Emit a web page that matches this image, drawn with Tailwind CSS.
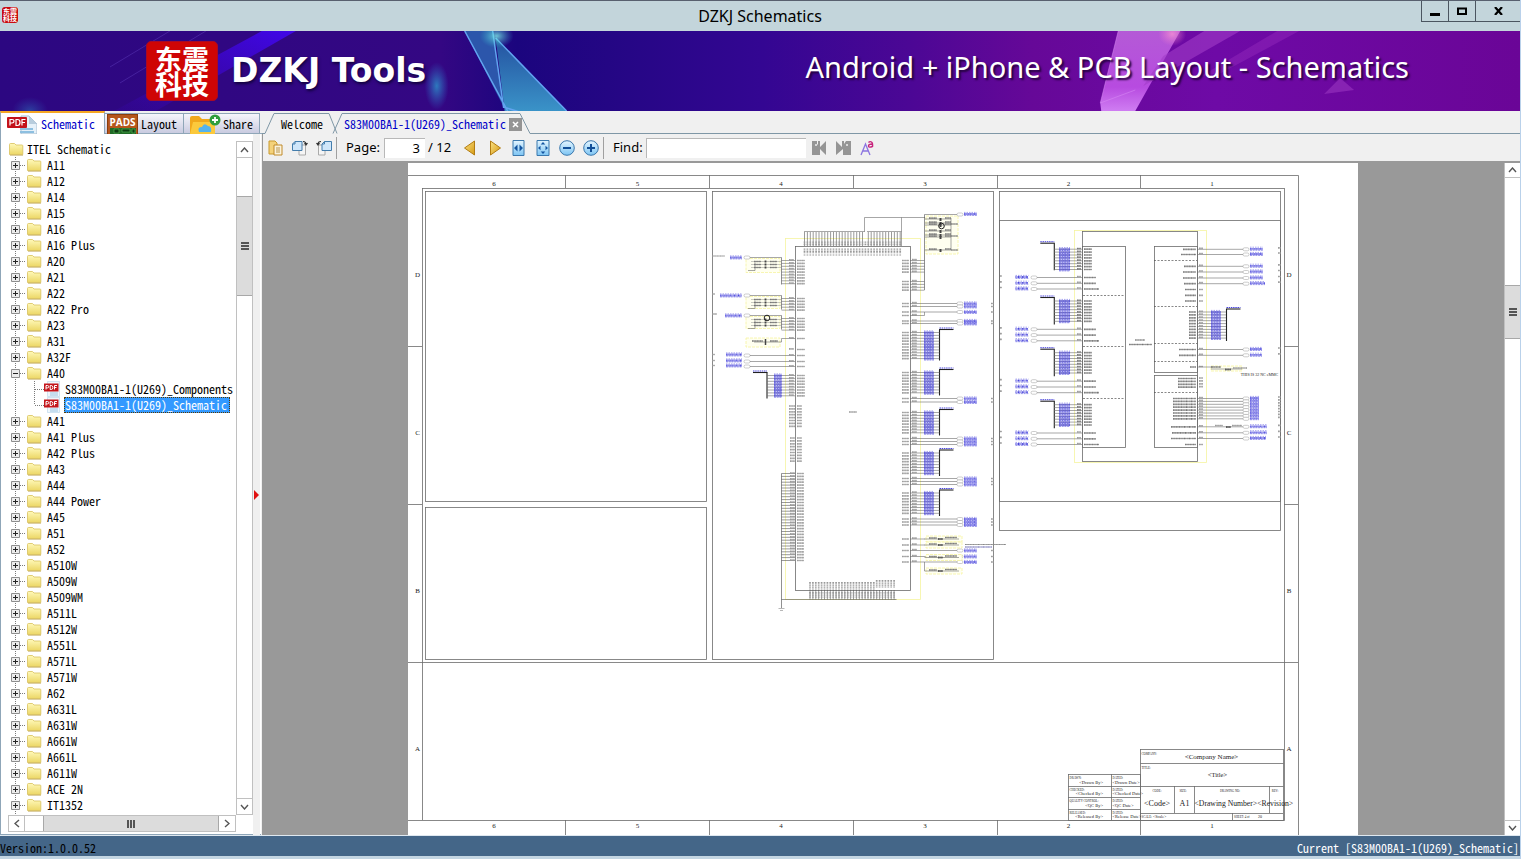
<!DOCTYPE html>
<html lang="en">
<head>
<meta charset="utf-8">
<title>DZKJ Schematics</title>
<script src="https://cdn.jsdelivr.net/npm/@tailwindcss/browser@4"></script>
</head>
<body class="relative h-screen flex flex-col overflow-hidden bg-[#f0f0f0] border-r border-[#b9d1ea] text-xs text-black font-['Noto_Sans_Mono_CJK_SC','Liberation_Mono',monospace]">

<svg class="absolute size-0" aria-hidden="true">
  <defs>
    <linearGradient id="fold" x1="0" y1="0" x2="0" y2="1"><stop offset="0" stop-color="#fff9ba"/><stop offset="1" stop-color="#ecd766"/></linearGradient>
    <linearGradient id="gold" x1="0" y1="0" x2="1" y2="1"><stop offset="0" stop-color="#fbe184"/><stop offset="1" stop-color="#d59a12"/></linearGradient>
    <linearGradient id="sky" x1="0" y1="0" x2="0" y2="1"><stop offset="0" stop-color="#e4f5ff"/><stop offset="1" stop-color="#7cc4f3"/></linearGradient>
    <symbol id="folder" viewBox="0 0 16 14"><path d="M1.500 12.500v-10q0-1 1-1h4l1.500 1.500h6q.8 0 .8.8v8.700z" fill="url(#fold)" stroke="#d8c05c" stroke-width=".8"/><path d="M2 13.300h13" stroke="#b79a3c" stroke-width=".6"/></symbol>
    <symbol id="pdf" viewBox="0 0 16 16"><path d="M3.500.5h12v15h-12z" fill="#eef6fc" stroke="#b5d3e8" stroke-width=".6"/><path d="M6 12h8M6 14h8" stroke="#9cc5e2"/><path d="M0 2.500h14.500v8H0z" fill="#c4161c"/><path d="M2 8.500v-4h1.500q1.200 0 1.200 1.200t-1.200 1.200H2M6.200 4.500v4h1q1.700 0 1.700-2t-1.700-2zM10.500 8.500v-4H13M10.500 6.500h2" fill="none" stroke="#fff"/></symbol>
  </defs>
</svg>

<header class="relative shrink-0 h-[31px] bg-[#c3d5db] border-t border-[#58606f] flex items-center justify-center">
  <span class="absolute left-[2px] top-[6px] size-4 rounded-[3px] bg-[#c90b10] text-white font-bold text-[7px] leading-[7px] font-['Noto_Sans_CJK_SC',sans-serif] text-center pt-px">东震<br>科技</span>
  <h1 class="font-['Noto_Sans',sans-serif] text-base">DZKJ Schematics</h1>
  <div class="absolute right-0 top-0 h-[21px] flex border-l border-b border-[#4b5560]">
    <button aria-label="Minimize" class="w-[27px] border-r border-[#4b5560] grid place-items-center"><svg width="11" height="10"><path d="M0 7h10v3H0z"/></svg></button>
    <button aria-label="Maximize" class="w-[27px] border-r border-[#4b5560] grid place-items-center"><svg width="10" height="8"><path d="M1 1.500h8v5.500H1z" fill="none" stroke="#000" stroke-width="2"/></svg></button>
    <button aria-label="Close" class="w-[44px] grid place-items-center"><svg width="9" height="8"><path d="M1 0l7 8M8 0L1 8" stroke="#000" stroke-width="2.200"/></svg></button>
  </div>
</header>

<section class="relative shrink-0 h-20 overflow-hidden flex items-center justify-between pl-[146px] pr-[111px] text-white">
  <svg class="absolute inset-0 size-full" viewBox="0 0 1521 80" preserveAspectRatio="none">
    <defs>
      <linearGradient id="bn"><stop offset="0" stop-color="#2c0781"/><stop offset=".29" stop-color="#340783"/><stop offset=".34" stop-color="#1b057e"/><stop offset=".4" stop-color="#240684"/><stop offset=".5" stop-color="#330692"/><stop offset=".6" stop-color="#4c0795"/><stop offset=".68" stop-color="#660898"/><stop offset=".8" stop-color="#6e0aa6"/><stop offset="1" stop-color="#6a0597"/></linearGradient>
      <linearGradient id="bl" x1="0" y1="1" x2="1" y2="0"><stop offset="0" stop-color="#3f05d0" stop-opacity=".1"/><stop offset="1" stop-color="#4207f5" stop-opacity=".9"/></linearGradient>
      <linearGradient id="tri" x1="0" y1="0" x2="0" y2="1"><stop offset="0" stop-color="#2451a0"/><stop offset="1" stop-color="#3a93c8"/></linearGradient>
      <linearGradient id="pk" x1="0" y1="0" x2="0" y2="1"><stop offset="0" stop-color="#b45ad6"/><stop offset=".7" stop-color="#b74be0"/><stop offset="1" stop-color="#cf7df2"/></linearGradient>
      <radialGradient id="glow"><stop offset="0" stop-color="#2d86c4" stop-opacity=".9"/><stop offset="1" stop-color="#2d6ac4" stop-opacity="0"/></radialGradient>
      <radialGradient id="spark"><stop offset="0" stop-color="#7ff0ea"/><stop offset="1" stop-color="#2fb6cc" stop-opacity="0"/></radialGradient>
      <radialGradient id="rose"><stop offset="0" stop-color="#ff9ad4" stop-opacity=".7"/><stop offset="1" stop-color="#f27ccc" stop-opacity="0"/></radialGradient>
    </defs>
    <path fill="url(#bn)" d="M0 0h1521v80H0z"/>
    <path fill="url(#bl)" d="M262 0h34l-140 80h-42z"/>
    <path d="M206 0L120 52M170 0L110 36" stroke="#6a48c9" stroke-opacity=".4"/>
    <ellipse cx="437" cy="55" rx="12" ry="24" fill="url(#glow)"/><ellipse cx="30" cy="80" rx="18" ry="14" fill="url(#glow)" opacity=".5"/>
    <path d="M465 0h28l11 76z" fill="#2c56ab"/><path d="M496 7l71 73h-62z" fill="url(#tri)"/>
    <path d="M465 0l43 80M493 0l11 77M496 7l71 73M504 76l16 5" fill="none" stroke="#62a4f0" stroke-width="1.500"/>
    <ellipse cx="497" cy="5" rx="17" ry="12" fill="url(#spark)" opacity=".8"/>
    <path d="M1119 0h62l-45 80h-34l-1-8z" fill="url(#pk)"/><path d="M1119 0l-18 72 35-13" fill="none" stroke="#da8ff4" stroke-opacity=".5"/>
    <path d="M1205 0h36l-79 45-18 10 20-30z" fill="#a23cc8" opacity=".6"/><path d="M1278 0h22l-78 42-20 3z" fill="#9a30c0" opacity=".4"/>
    <path d="M1341 47l14 12-30 4z" fill="#9a36c0" opacity=".6"/><ellipse cx="1173" cy="3" rx="14" ry="12" fill="url(#rose)"/>
  </svg>
  <div class="relative flex items-center gap-[13px]">
    <div class="w-[72px] h-[60px] rounded-[5px] bg-[#cf0505] border border-[#a70a28] font-bold text-[27px] leading-[25px] pt-[4px] text-center font-['Noto_Sans_CJK_SC',sans-serif]">东震<br>科技</div>
    <strong class="font-['DejaVu_Sans',sans-serif] text-[33px] leading-10 [text-shadow:1px_2px_3px_#12033d]">DZKJ Tools</strong>
  </div>
  <p class="relative -mt-2 font-['Noto_Sans',sans-serif] text-[29px] leading-10 whitespace-nowrap [text-shadow:2px_2px_2px_#25033f]">Android + iPhone &amp; PCB Layout - Schematics</p>
</section>

<main class="flex-1 min-h-0 flex">
  <aside class="relative w-[262px] shrink-0 flex flex-col">
    <nav class="h-[23px] shrink-0 flex border-b border-[#8fa6b8]" aria-label="Libraries">
      <button class="w-[105px] -mb-px bg-white border-t-2 border-x border-t-[#f5a623] border-x-[#8fa6b8] flex items-center gap-1 pl-[6px] text-[#0000c8]">
        <svg width="30" height="20" viewBox="0 0 30 20"><path d="M14 20V2h8l8 8v10z" fill="#e6f1f9" stroke="#a9bfd0"/><path d="M22 2l8 8h-8z" fill="#b8cddd"/><path d="M13 15h13M13 18h14" stroke="#8dbfe0" stroke-width="2"/><rect y="3" width="20" height="11" rx="1" fill="#c4121a"/><path d="M3 11.500v-6h2q2 0 2 1.700T5 9H3M9 5.500v6h1.500q2.500 0 2.500-3t-2.500-3zM15 11.500v-6h3.500M15 8.500h3" fill="none" stroke="#fff" stroke-width="1.200"/></svg>Schematic</button>
      <button class="w-[79px] mt-[2px] border-r border-t border-[#8fa6b8] bg-linear-to-b from-[#f6f6fb] to-[#c9cbe0] flex items-center gap-[3px] pl-[2px]">
        <svg width="31" height="20" viewBox="0 0 31 20"><rect x=".5" y=".5" width="30" height="20" fill="#b5561c" stroke="#8c3c0c"/><path d="M3 20v-6h26v6z" fill="#206b26"/><path d="M7 15h5v4H7zM15 15h8v3h-8zM25 15h3v4h-3z" fill="#0c3d12" stroke="#53b055" stroke-width=".7"/><text x="15.500" y="11.500" text-anchor="middle" font-family="Open Sans" font-weight="700" font-size="10" fill="#fff">PADS</text></svg>Layout</button>
      <button class="w-[76px] mt-[2px] border-r border-t border-[#8fa6b8] bg-linear-to-b from-[#f6f6fb] to-[#c9cbe0] flex items-center gap-[2px] pl-[5px]">
        <svg width="32" height="20" viewBox="0 0 32 20"><path d="M1 20V4q0-2 2-2h7l3 3h11v15z" fill="#f0a81c"/><path d="M1 20L4 8h22v12z" fill="#fbc93c"/><path d="M10 18q-2-5 3-5 2-5 6-1 4 0 3 6z" fill="#55b3ec"/><circle cx="26" cy="6" r="5.500" fill="#2f9e3c"/><path d="M26 3v6M23 6h6" stroke="#fff" stroke-width="1.800"/></svg>Share</button>
    </nav>
    <div class="flex-1 min-h-0 bg-white border-l border-[#8fa6b8] pt-[7px] pl-[7px] pr-2 pb-[2px] mr-[1px] border-b flex flex-col">
      <div class="flex-1 min-h-0 flex">
        <ul id="tree" class="flex-1 min-w-0 overflow-hidden"></ul>
        <div class="w-[17px] shrink-0 flex flex-col border-x border-[#c0c0c0]">
          <button aria-label="Scroll up" class="h-[17px] border-y border-[#c0c0c0] grid place-items-center"><svg width="9" height="6"><path d="M1 5l3.500-4L8 5" fill="none" stroke="#555" stroke-width="1.400"/></svg></button>
          <div class="h-[38px]"></div>
          <div class="h-[100px] bg-[#dcdcdc] border-y border-[#a8a8a8] grid place-items-center"><svg width="8" height="8"><path d="M0 1h8M0 4h8M0 7h8" stroke="#555" stroke-width="2"/></svg></div>
          <div class="flex-1"></div>
          <button aria-label="Scroll down" class="h-[17px] border-y border-[#c0c0c0] grid place-items-center"><svg width="9" height="6"><path d="M1 1l3.500 4L8 1" fill="none" stroke="#555" stroke-width="1.400"/></svg></button>
        </div>
      </div>
      <div class="h-[17px] shrink-0 mr-[17px] flex border-y border-[#c0c0c0]">
        <button aria-label="Scroll left" class="w-[17px] border-x border-[#c0c0c0] grid place-items-center"><svg width="6" height="9"><path d="M5 1L1 4.500 5 8" fill="none" stroke="#555" stroke-width="1.400"/></svg></button>
        <div class="w-[18px]"></div>
        <div class="flex-1 bg-[#dcdcdc] border-x border-[#a8a8a8] grid place-items-center"><svg width="8" height="8"><path d="M1 0v8M4 0v8M7 0v8" stroke="#555" stroke-width="2"/></svg></div>
        <button aria-label="Scroll right" class="w-[17px] border-r border-[#c0c0c0] grid place-items-center"><svg width="6" height="9"><path d="M1 1l4 3.500L1 8" fill="none" stroke="#555" stroke-width="1.400"/></svg></button>
      </div>
    </div>
    <svg class="absolute left-[253px] top-[23px] h-[calc(100%-23px)]" width="9"><path d="M0 0h7v2000H0z" fill="#f0f0f0"/><path d="M1 356l5 5-5 5z" fill="#e01010"/></svg>
  </aside>

  <section class="flex-1 min-w-0 flex flex-col">
    <nav class="relative h-[23px] shrink-0" aria-label="Documents">
      <svg class="absolute inset-0 size-full"><path d="M0 22.500h3L12 2.500h55l8 20" fill="none" stroke="#7f97a6"/><path d="M71 22.500l9-20h178l10 20h2000" fill="none" stroke="#7f97a6"/></svg>
      <div class="relative h-full flex items-center pt-[3px] pl-[19px]">
        <button>Welcome</button>
        <button class="ml-[21px] text-[#0000c8]">S83M00BA1-1(U269)_Schematic</button>
        <button aria-label="Close tab" class="ml-[3px] size-[13px] bg-[#949494] grid place-items-center"><svg width="7" height="7"><path d="M1 1l5 5M6 1L1 6" stroke="#fff" stroke-width="1.500"/></svg></button>
      </div>
    </nav>
    <div class="h-[29px] shrink-0 border-b-2 border-[#999] border-l flex items-center pl-[5px] font-['Noto_Sans',sans-serif] text-[13px]">
      <button aria-label="Open"><svg width="16" height="16" viewBox="0 0 16 16"><path d="M1 1h6l2 2v11H1z" fill="#f4d27a" stroke="#c99a2e"/><path d="M6 5h8v10H6z" fill="#fbf3dc" stroke="#c08a2a"/><path d="M8 8h4M8 10h4M8 12h4" stroke="#b8954e"/></svg></button>
      <button aria-label="Rotate right" class="ml-[8px]"><svg width="16" height="16" viewBox="0 0 16 16"><path d="M7 5h6.500v10H7z" fill="#f5f5f5" stroke="#aaa"/><path d="M3 1.500h7v9H.500V4z" fill="#cfe6fa" stroke="#447dac"/><path d="M3 1.500V4H.500" fill="none" stroke="#447dac"/><path d="M11 1.500q3 0 3 3M12.500 3l1.500 2 1.500-2" fill="none" stroke="#333" stroke-width="1.200"/></svg></button>
      <button aria-label="Rotate left" class="ml-[8px]"><svg width="16" height="16" viewBox="0 0 16 16"><path d="M2.500 5H9v10H2.500z" fill="#f5f5f5" stroke="#aaa"/><path d="M8.500 1.500h7v9H6V4z" fill="#cfe6fa" stroke="#447dac"/><path d="M8.500 1.500V4H6" fill="none" stroke="#447dac"/><path d="M5 1.500q-3 0-3 3M.5 3L2 5l1.500-2" fill="none" stroke="#333" stroke-width="1.200"/></svg></button>
      <span class="ml-1 w-px h-[22px] bg-[#a0a0a0]"></span>
      <label for="page" class="ml-[9px] w-[38px]">Page:</label>
      <input id="page" value="3" class="w-[41px] h-[20px] bg-white border-l border-t border-[#b8b8b8] text-right pr-[5px] mr-[3px]">
      <span class="w-[32px]">/ 12</span>
      <button aria-label="Previous page" class="ml-[3px]"><svg width="13" height="16" viewBox="0 0 13 16"><path d="M11.500 1v14L1.500 8z" fill="url(#gold)" stroke="#b27c12"/></svg></button>
      <button aria-label="Next page" class="ml-[13px]"><svg width="13" height="16" viewBox="0 0 13 16"><path d="M1.500 1v14l10-7z" fill="url(#gold)" stroke="#b27c12"/></svg></button>
      <button aria-label="Fit width" class="ml-[10px]"><svg width="13" height="16" viewBox="0 0 13 16"><path d="M1 .5h11v15H1z" fill="url(#sky)" stroke="#3b78ad"/><path d="M2 8l3.500-3.500v7zM11 8L7.500 4.500v7z" fill="#1354a0"/></svg></button>
      <button aria-label="Fit page" class="ml-[11px]"><svg width="14" height="16" viewBox="0 0 14 16"><path d="M1 .5h12v15H1z" fill="url(#sky)" stroke="#3b78ad"/><path d="M7 2l2.300 2.500H4.700zM7 14l2.300-2.500H4.700zM2 8l2.500-2.300v4.600zM12 8L9.500 5.700v4.600z" fill="#1354a0"/></svg></button>
      <button aria-label="Zoom out" class="ml-[9px]"><svg width="16" height="16"><circle cx="8" cy="8" r="7.300" fill="url(#sky)" stroke="#3b78ad"/><path d="M4 8h8" stroke="#124f98" stroke-width="2"/></svg></button>
      <button aria-label="Zoom in" class="ml-[8px]"><svg width="16" height="16"><circle cx="8" cy="8" r="7.300" fill="url(#sky)" stroke="#3b78ad"/><path d="M4 8h8M8 4v8" stroke="#124f98" stroke-width="2"/></svg></button>
      <span class="ml-1 w-px h-[22px] bg-[#a0a0a0]"></span>
      <label for="find" class="ml-[9px] w-[33px]">Find:</label>
      <input id="find" class="w-[160px] h-[20px] bg-white border-l border-t border-[#b8b8b8] px-1">
      <button aria-label="Find previous" class="ml-[5px]"><svg width="16" height="16"><path d="M1 1h5v3l1 1V1h2v6l6-6v14L9 9v6H1z" fill="#959595"/><circle cx="5" cy="5" r="1" fill="#eee"/></svg></button>
      <button aria-label="Find next" class="ml-[8px]"><svg width="17" height="16"><path d="M1 1l6 6V1h2v3l2-3h5v14H8V9l-7 6z" fill="#959595"/><circle cx="12" cy="5" r="1" fill="#eee"/></svg></button>
      <button aria-label="Match case" class="ml-[8px]"><svg width="15" height="18"><path d="M1 16L5.500 5 10 16M2.500 12h6" fill="none" stroke="#8b74e0" stroke-width="1.300"/><path d="M8.500 3.500Q10 2 11.500 3t1 5M12.500 5q-4 0-4 2t4 .5" fill="none" stroke="#c8237c" stroke-width="1.400"/></svg></button>
    </div>
    <div class="flex-1 min-h-0 flex bg-[#999]">
      <div class="flex-1 min-w-0 overflow-hidden flex justify-center">
        <svg id="sheet" class="bg-white w-[950px] h-[672px] shrink-0" viewBox="408 163 950 672" font-family="Liberation Serif"></svg>
      </div>
      <div class="w-4 shrink-0 bg-white border-l border-[#c0c0c0] flex flex-col">
        <button aria-label="Page up" class="h-[15px] border-b border-[#c0c0c0] grid place-items-center"><svg width="9" height="6"><path d="M1 5l3.500-4L8 5" fill="none" stroke="#555" stroke-width="1.400"/></svg></button>
        <div class="h-[107px]"></div>
        <div class="h-[54px] bg-[#dcdcdc] border-y border-[#a8a8a8] grid place-items-center"><svg width="8" height="8"><path d="M0 1h8M0 4h8M0 7h8" stroke="#555" stroke-width="2"/></svg></div>
        <div class="flex-1"></div>
        <button aria-label="Page down" class="h-[15px] border-t border-[#c0c0c0] grid place-items-center"><svg width="9" height="6"><path d="M1 1l3.500 4L8 1" fill="none" stroke="#555" stroke-width="1.400"/></svg></button>
      </div>
    </div>
  </section>
</main>

<footer class="shrink-0 h-[24px] bg-[#446688] border-t border-b-3 border-t-[#dfe8f0] border-b-[#c3d5e2] flex items-center justify-between pt-[4px] pr-px">
  <span>Version:1.0.0.52</span><span class="text-white">Current [S83M00BA1-1(U269)_Schematic]</span>
</footer>

<script>
// Folder tree
const names = ['A11','A12','A14','A15','A16','A16 Plus','A20','A21','A22','A22 Pro','A23','A31','A32F','A40','A41','A41 Plus','A42 Plus','A43','A44','A44 Power','A45','A51','A52','A510W','A509W','A509WM','A511L','A512W','A551L','A571L','A571W','A62','A631L','A631W','A661W','A661L','A611W','ACE 2N','IT1352',''];
const folder = '<svg class="w-4 h-[14px] shrink-0"><use href="#folder"/></svg>';
let rows = `<li class="h-4 flex items-center gap-[3px]">${folder}<span>ITEL Schematic</span></li>`;
for (const n of names) {
  const open = n === 'A40';
  rows += `<li class="h-4 flex items-center"><svg class="w-[18px] h-4 shrink-0"><path d="M7.500 0v16M12 8.500h6" stroke="#7a7a7a" stroke-dasharray="1 1"/><path d="M3.500 4.500h8v8h-8z" fill="#ececec" stroke="#8e8e8e"/><path d="${open ? 'M5 8.500h5' : 'M5 8.500h5M7.500 6v5'}" stroke="#222"/></svg>${folder}<span class="ml-[5px] whitespace-nowrap">${n}</span></li>`;
  if (open) for (const f of ['Components','Schematic']) {
    rows += `<li class="h-4 flex items-center"><svg class="w-[36px] h-4 shrink-0"><path d="M7.500 0v16M26.500 0v${f === 'Schematic' ? 8 : 16}M27 8.500h9" stroke="#7a7a7a" stroke-dasharray="1 1"/></svg><svg class="size-4 shrink-0"><use href="#pdf"/></svg><span class="${f === 'Schematic' ? 'ml-[4px] pl-px pr-[3px] h-4 leading-4 whitespace-nowrap bg-[#3399ff] text-white outline-1 outline-dotted -outline-offset-1 outline-[#5a3a00]' : 'ml-[5px] whitespace-nowrap'}">S83M00BA1-1(U269)_${f}</span></li>`;
  }
}
document.getElementById('tree').innerHTML = rows;

// Schematic sheet
const K = '#6b6b6b', B = '#4a46dc', Y = '#f6f4a0';
const out = [];
const ln = (x1, y1, x2, y2, c = K, w = .6, d = '') => out.push(`<path d="M${x1} ${y1}L${x2} ${y2}" stroke="${c}" stroke-width="${w}" ${d ? `stroke-dasharray="${d}"` : ''}/>`);
const box = (x1, y1, x2, y2, c = K, w = .8) => out.push(`<rect x="${x1}" y="${y1}" width="${x2 - x1}" height="${y2 - y1}" fill="none" stroke="${c}" stroke-width="${w}"/>`);
const tx = (x, y, s, t, a = 'middle') => out.push(`<text x="${x}" y="${y}" font-size="${s}" text-anchor="${a}" fill="#222">${t}</text>`);
// micro label: a band of short strokes
const mk = (x, y, w, c = '#999', h = 1.7) => { ln(x, y, x + w, y, c, h, '.9 .4 .6 .5 1.3 .4 .5 .6'); ln(x, y, x + w, y, c, .5); };
const mkv = (x, y, h) => ln(x, y, x, y + h, '#999', 1.7, '.9 .4 .6 .5 1.3 .4 .5 .6');
const blue = (x, y, w) => { ln(x, y, x + w, y, B, 1.8, '.8 .5 .6 .5 1.1 .4'); ln(x, y + 1.4, x + w, y + 1.4, B, .6, '2 .7'); ln(x, y - 1.6, x + w, y - 1.6, B, .5, '1.5 1'); };
const port = (x, y) => out.push(`<rect x="${x}" y="${y - 1.5}" width="6" height="3" rx="1.5" fill="#fff" stroke="#999" stroke-width=".5"/>`);
const seq = (a, n, f, s = 2.9) => { for (let i = 0; i < n; i++) f(a + i * s); };

// drawing frame
ln(408, 175.5, 1298.5, 175.5, K, .8); ln(1298.5, 175.5, 1298.5, 835, K, .8);
box(422.5, 188.5, 1284.5, 820.5);
ln(408, 820.5, 422, 820.5, K, .8);
for (const x of [565.5, 709.5, 853.5, 997.5, 1140.5]) { ln(x, 175, x, 188, K, .8); ln(x, 820, x, 835, K, .8); }
for (const y of [346.5, 504.5]) { ln(408, y, 422, y, K, .8); ln(1284, y, 1298, y, K, .8); }
ln(408, 662.5, 1298, 662.5, K, .8);
[494, 637.5, 781, 925, 1068.5, 1212].forEach((x, i) => { tx(x, 186, 7, 6 - i); tx(x, 828, 7, 6 - i); });
[['D', 277], ['C', 435], ['B', 593], ['A', 751]].forEach(([t, y]) => { tx(417.5, y, 7, t); tx(1289, y, 7, t); });
box(425.5, 191.5, 706.5, 501.5); box(425.5, 507.5, 706.5, 659.5); box(712.5, 191.5, 993.5, 659.5);
box(999.5, 191.5, 1280.5, 530.5); box(999.5, 220.5, 1280.5, 501.5);

// memory controller, centre
box(785.5, 238.5, 920.5, 599.5, Y, .8);
box(795.5, 246.5, 910.5, 590.5);
mk(849, 412, 8);
seq(804.5, 34, x => { if (Math.abs(x - 865.5) > 1) ln(x, 232, x, 246, '#555'); mkv(x, 241.5, 4); mkv(x, 248.5, 7); });
ln(804, 231.5, 864.5, 231.5); ln(867, 231.5, 901.5, 231.5); ln(864.5, 217.5, 864.5, 232); ln(864.5, 217.5, 925, 217.5); ln(901.5, 217.5, 901.5, 246);
const yel = (x1, y1, x2, y2) => out.push(`<rect x="${x1}" y="${y1}" width="${x2 - x1}" height="${y2 - y1}" fill="#fffff0" stroke="${Y}" stroke-width=".8" stroke-dasharray="3 1"/>`);
yel(926, 216, 958, 254);
ln(924.5, 214.5, 924.5, 290, '#444'); ln(924.5, 214.5, 957, 214.5); port(957, 214.5); blue(964, 214, 13); ln(951, 218, 951, 250);
for (const y of [219, 223, 225, 231, 235, 237, 250]) { ln(925, y, 951, y, '#666', .6); mk(929, y - .8, 8, '#777'); mk(945, y - 1, 6, '#777'); ln(940.5, y - 1, 940.5, y + 2, '#444', 2); }
for (const y of [224, 236, 250]) mk(951, y, 7, '#666', 1);
out.push('<circle cx="941.5" cy="226" r="2.800" fill="none" stroke="#222" stroke-width="1"/>');
const pinL = y => { mk(789, y - .6, 5); mk(797, y, 8); };
const capL = (y, n, k, lab) => {
  yel(746, y + 1, 780, y + (n > 6 ? 15 : 13));
  ln(749, y, 781.5, y); ln(781.5, y, 781.5, y + k, '#444');
  port(744, y); blue(742 - lab, y, lab);
  for (const d of [4, 7, 10]) { ln(751, y + d, 781, y + d, '#777', .4); mk(754, y + d, 7, '#777'); mk(770, y + d, 7, '#777'); ln(765.5, y + d - 1, 765.5, y + d + 1, '#444', 1.8); }
  ln(755, y + 5, 755, y + 13); ln(755, y + 13, 748, y + 13);
  seq(y + 3, n, v => { ln(781.5, v, 795, v); pinL(v); });
};
capL(257.5, 9, 27, 12); capL(295.5, 5, 14, 22); capL(315.5, 5, 14, 17);
yel(746, 338, 780, 347); mk(752, 341, 11, '#777'); mk(770, 341, 8, '#777'); ln(754, 342, 781.5, 342); ln(781.5, 342, 781.5, 338.5); ln(781.5, 338.5, 795, 338.5); pinL(338.5);
ln(765.5, 339, 765.5, 345, '#444', 1.5);
out.push('<circle cx="767" cy="318" r="2.800" fill="none" stroke="#222" stroke-width="1"/>');
pinL(349.5);
for (const y of [355.5, 361.5, 366.5]) { port(744, y); blue(726, y - 1, 16); ln(750, y, 795, y); mk(712, y - 1, 3); pinL(y); }
mk(712, 256, 13, '#999', 1); mk(712, 294, 3); mk(712, 314, 5);
const bus = (x, y, h, dir, w = 14) => { ln(x - .5 * dir, y, x + w * dir, y, '#222', 1.1); ln(x, y, x, y + h, '#222', 1.1); ln(dir > 0 ? x : x - w, y - 1.5, dir > 0 ? x + w : x, y - 1.5, B, 1, '1.5 .7'); };
bus(767, 372.5, 26, -1);
seq(375.5, 8, y => { ln(767, y, 795, y); blue(774, y, 8); pinL(y); });
seq(406, 8, y => { mk(789, y, 6); mk(797, y, 5); }); seq(438, 9, y => { mk(790, y, 5); mk(797, y, 5); });
seq(473.5, 31, y => { ln(781.5, y, 795, y, '#555'); mk(790, y - .5, 5); mk(797, y, 7); });
ln(781.5, 473.5, 781.5, 608, '#444'); ln(778.5, 608.5, 784.5, 608.5, '#888'); ln(780, 610.5, 783, 610.5, '#888');
ln(781.5, 599.5, 896.5, 599.5, '#555');
seq(810, 30, x => { ln(x, 590, x, 599.5, '#555'); mkv(x, x > 875 ? 580 : 582, 8); mkv(x, 592, 6); });
const pinR = y => { mk(902, y, 7); mk(912, y - .8, 5); };
seq(260.5, 5, y => { ln(910, y, 924.5, y); pinR(y); }); seq(281.5, 4, y => { ln(910, y, 924.5, y); pinR(y); });
for (const y of [303.5, 306.5, 312, 321, 323.5, 398.5, 402, 438.5, 441.5, 444.5, 478.5, 481.5, 484.5, 519, 522, 525, 550.5, 556.5, 562]) {
  ln(910, y, 957, y); port(957, y); blue(964, y, 13); pinR(y); mk(991, y, 3);
}
pinR(315.5); ln(910, 315.5, 924.5, 315.5); ln(924.5, 312, 924.5, 315.5);
[[329.5, 31, 10], [369.5, 26, 8], [409.5, 26, 8], [450, 26, 8], [490, 26, 8]].forEach(([y, h, n]) => {
  bus(939.5, y, h, 1);
  seq(y + 3, n, v => { ln(910, v, 939.5, v); blue(924, v, 10); pinR(v); });
});
for (const y of [539, 545, 557.5, 571]) { yel(926, y - 3, 962, y + 3); ln(924.5, y, 959, y); mk(929, y - 1, 8, '#777'); mk(945, y - 1.5, 12, '#777'); mk(938, y, 5, '#555', 2); }
for (const y of [539, 545]) { ln(910, y, 925, y); pinR(y); }
ln(924.5, 562, 924.5, 571); mk(965, 544.5, 41, '#888', 1.2); mk(965, 547, 27, '#7a78b8', 1.2);

// eMMC package, right
box(1074.5, 230.5, 1206.5, 462.5, Y, .8);
box(1082.5, 231.5, 1197.5, 461.5); box(1082.5, 246.5, 1125.5, 447.5); box(1154.5, 246.5, 1197.5, 372.5); box(1154.5, 375.5, 1197.5, 447.5);
for (const y of [295.5, 346.5, 398.5]) ln(1083, y, 1125, y, '#555', .7, '2 1.5');
for (const y of [260.5, 306.5, 343.5, 361.5, 392.5]) ln(1154, y, 1197, y, '#555', .7, '2 1.5');
mk(1135, 340, 10, '#888', 1.5); mk(1129, 344.5, 23, '#777', 1.5);
for (const y0 of [243.2, 297.5, 349.2, 401.2]) {
  bus(1054.3, y0, 27, -1);
  seq(y0 + (y0 < 250 ? 6 : 3.5), 8, y => { ln(1054, y, 1082, y); blue(1059, y, 11); mk(1077, y - .7, 4, '#777'); mk(1084, y, 8, '#777'); });
}
for (const y0 of [277.5, 329.3, 381.2, 433]) [0, 5.8, 11.5].forEach((d, i) => {
  const y = y0 + d; ln(1037, y, 1082, y); port(1031, y); blue(1015.5, y - .5, 13); mk(1000, y - 1.5, 2); mk(1077, y - 1, 4); mk(1084, y, i == 2 ? 15 : 12, '#777');
});
const outR = (y, w, l) => { ln(1197, y, 1243, y); port(1243, y); blue(1250, y - .5, w); mk(1199, y - 1, 4); mk(1197 - l, y, l - 1, '#777'); mk(1278, y - 1.5, 3); };
[[249.3, 13, 14], [254.5, 13, 16], [266.3, 13, 13], [272, 13, 14], [278, 13, 14], [283.7, 15, 13], [349.5, 12, 18], [355.3, 12, 18], [426.8, 17, 26], [432.8, 17, 25], [438.5, 16, 26]].forEach(a => outR(...a));
for (const y of [289.5, 295.3, 301, 444.5]) { mk(1185, y, 11, '#777'); mk(1199, y, 4); }
seq(398.5, 8, y => outR(y, 9, 24));
bus(1226.5, 309, 32, 1);
seq(312, 10, y => { ln(1197, y, 1226, y); blue(1211, y, 10); mk(1189, y, 7, '#777'); mk(1199, y - .7, 4); });
yel(1211, 366, 1242, 371); mk(1190, 367, 6, '#777'); mk(1199, 366.5, 4); ln(1197, 367, 1213, 367); mk(1211, 367, 10, '#777'); ln(1211, 369, 1242, 369); mk(1225, 369.5, 6, '#555', 2); mk(1233, 368, 14);
tx(1259.5, 375.5, 4, 'THIS IS 32 NC eMMC');
seq(378.5, 4, y => { mk(1178, y, 18, '#777'); mk(1199, y - .5, 4); });
mk(1215, 425.5, 8); mk(1232, 425.5, 10); mk(1226, 427, 5, '#555', 2);

// title block
box(1140.5, 749.5, 1283.5, 820.5); box(1068.5, 774.5, 1140.5, 820.5);
ln(1140.5, 763.5, 1283.5, 763.5, K, .8); ln(1068, 786.5, 1283.5, 786.5, K, .8); ln(1140, 813.5, 1283, 813.5, K, .8);
for (const x of [1174.5, 1194.5, 1269.5]) ln(x, 786, x, 813, K, .8);
ln(1232.5, 813, 1232.5, 820, K, .8); ln(1111.5, 774, 1111.5, 820, K, .8); ln(1068, 797.5, 1140, 797.5, K, .8); ln(1068, 809.5, 1140, 809.5, K, .8);
tx(1211.5, 758.5, 7, '&lt;Company Name&gt;'); tx(1217.5, 777, 6.5, '&lt;Title&gt;'); tx(1157, 806, 8, '&lt;Code&gt;'); tx(1184.5, 806, 8, 'A1');
tx(1194.5, 806, 7.7, '&lt;Drawing Number&gt;&lt;Revision&gt;', 'start');
tx(1141.5, 755, 3, 'COMPANY:', 'start'); tx(1141.5, 769, 3, 'TITLE:', 'start'); tx(1157, 792, 3, 'CODE:'); tx(1183, 792, 3, 'SIZE:'); tx(1230, 792, 3, 'DRAWING NO:'); tx(1275, 792, 3, 'REV:');
tx(1141.5, 818, 3, 'SCALE:', 'start'); tx(1153, 818, 4, '&lt;Scale&gt;', 'start'); tx(1234, 818, 3, 'SHEET:', 'start'); tx(1247, 818, 3, '4 of'); tx(1260, 818, 4, '20');
[['DRAWN:', 'Drawn By', 'Drawn Date', 783.5], ['CHECKED:', 'Checked By', 'Checked Date', 795], ['QUALITY CONTROL:', 'QC By', 'QC Date', 806.5], ['RELEASED:', 'Released By', 'Release Date', 818]].forEach(([l, a, b, y]) => {
  tx(1069.5, y - 4.5, 3, l, 'start'); tx(1112.5, y - 4.5, 3, 'DATED:', 'start'); tx(1103, y, 4.5, `&lt;${a}&gt;`, 'end'); tx(1112.5, y, 4.5, `&lt;${b}&gt;`, 'start');
});
document.getElementById('sheet').innerHTML = out.join('');
</script>
</body>
</html>
